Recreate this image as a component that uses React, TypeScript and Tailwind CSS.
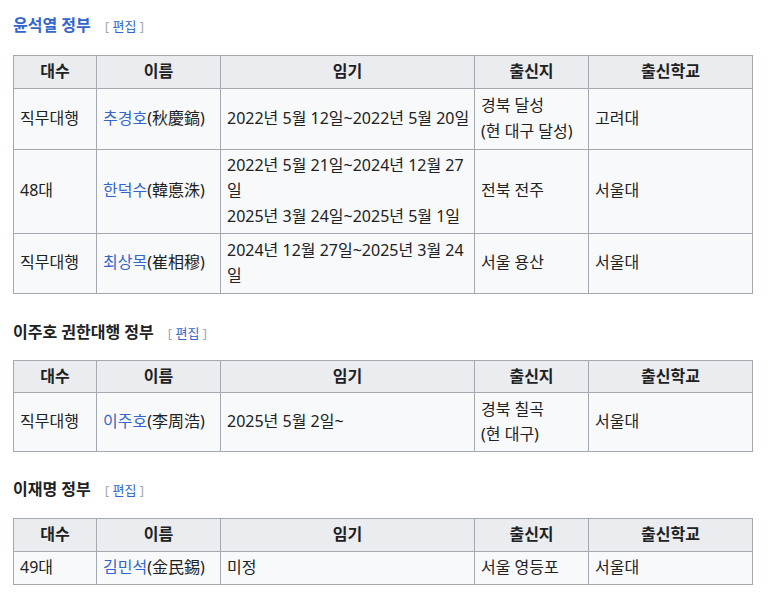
const rows1 = [
  {
    no: '직무대행',
    name: '추경호',
    hanja: '(秋慶鎬)',
    term: ['2022년 5월 12일~2022년 5월 20일'],
    nowrap: true,
    from: ['경북 달성', '(현 대구 달성)'],
    school: '고려대',
    h: 'h-[61px]',
  },
  {
    no: '48대',
    name: '한덕수',
    hanja: '(韓悳洙)',
    term: ['2022년 5월 21일~2024년 12월 27일', '2025년 3월 24일~2025년 5월 1일'],
    nowrap: false,
    from: ['전북 전주'],
    school: '서울대',
    h: 'h-[84px]',
  },
  {
    no: '직무대행',
    name: '최상목',
    hanja: '(崔相穆)',
    term: ['2024년 12월 27일~2025년 3월 24일'],
    nowrap: false,
    from: ['서울 용산'],
    school: '서울대',
    h: 'h-[60px]',
  },
];

const rows2 = [
  {
    no: '직무대행',
    name: '이주호',
    hanja: '(李周浩)',
    term: ['2025년 5월 2일~'],
    nowrap: false,
    from: ['경북 칠곡', '(현 대구)'],
    school: '서울대',
    h: 'h-[59px]',
  },
];

const rows3 = [
  {
    no: '49대',
    name: '김민석',
    hanja: '(金民錫)',
    term: ['미정'],
    nowrap: false,
    from: ['서울 영등포'],
    school: '서울대',
    h: 'h-[33px]',
  },
];

type Row = (typeof rows1)[number];

function Heading({ title, blue }: { title: string; blue?: boolean }) {
  return (
    <div className="flex items-baseline h-[24px] leading-[24px]">
      <span className={`text-[16px] font-bold ${blue ? 'text-[#3366cc]' : 'text-[#202122]'}`}>{title}</span>
      <span className="ml-[14px] text-[13px] text-[#a2a9b1]">
        [ <span className="text-[#3366cc]">편집</span> ]
      </span>
    </div>
  );
}

function Table({ rows }: { rows: Row[] }) {
  const th = 'border border-[#a2a9b1] bg-[#eaecf0] font-bold text-center px-[6px] py-[3px]';
  const td = 'border border-[#a2a9b1] px-[6px] py-[3px] align-middle';
  return (
    <table className="table-fixed border-collapse w-[739px] bg-[#f8f9fa] text-[#202122] text-[16px] leading-[25.6px]">
      <colgroup>
        <col className="w-[83px]" />
        <col className="w-[124px]" />
        <col className="w-[254px]" />
        <col className="w-[114px]" />
        <col className="w-[164px]" />
      </colgroup>
      <thead>
        <tr className="h-[32px]">
          <th className={th}>대수</th>
          <th className={th}>이름</th>
          <th className={th}>임기</th>
          <th className={th}>출신지</th>
          <th className={th}>출신학교</th>
        </tr>
      </thead>
      <tbody>
        {rows.map((r) => (
          <tr key={r.name} className={r.h}>
            <td className={td}>{r.no}</td>
            <td className={td}>
              <span className="text-[#3366cc]">{r.name}</span>
              {r.hanja}
            </td>
            <td className={`${td} ${r.nowrap ? 'whitespace-nowrap' : ''}`}>
              {r.term.map((t) => (
                <div key={t}>{t}</div>
              ))}
            </td>
            <td className={td}>
              {r.from.map((t) => (
                <div key={t}>{t}</div>
              ))}
            </td>
            <td className={td}>{r.school}</td>
          </tr>
        ))}
      </tbody>
    </table>
  );
}

export default function App() {
  return (
    <div
      className="bg-white w-[781px] h-[595px] px-[13px] pt-[13px]"
      style={{ fontFamily: '"Noto Sans", "Noto Sans CJK KR", sans-serif' }}
    >
      <Heading title="윤석열 정부" blue />
      <div className="mt-[18px]">
        <Table rows={rows1} />
      </div>
      <div className="mt-[26px]">
        <Heading title="이주호 권한대행 정부" />
      </div>
      <div className="mt-[16px]">
        <Table rows={rows2} />
      </div>
      <div className="mt-[25px]">
        <Heading title="이재명 정부" />
      </div>
      <div className="mt-[17px]">
        <Table rows={rows3} />
      </div>
    </div>
  );
}
